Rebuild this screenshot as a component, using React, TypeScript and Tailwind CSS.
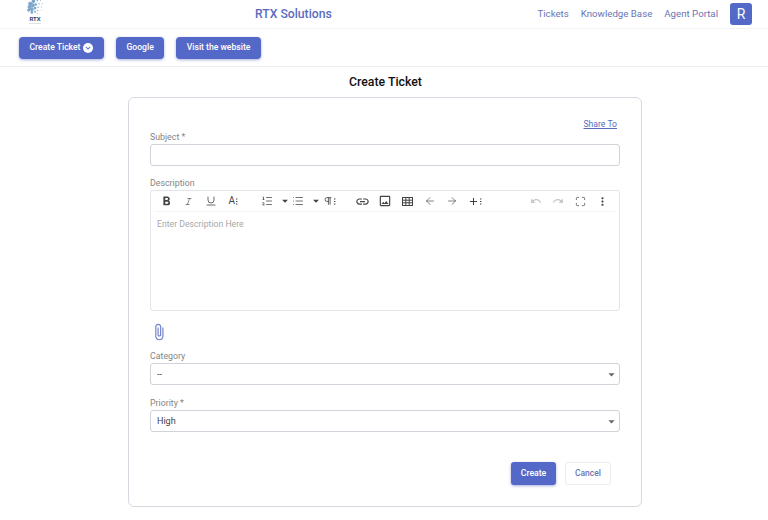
import React from "react";
import {
  ArrowLeft,
  ArrowRight,
  Italic,
  List,
  ListOrdered,
  Maximize,
  Pilcrow,
  Plus,
  Underline,
} from "lucide-react";
import {
  MdArrowDropDown,
  MdAttachFile,
  MdFormatBold,
  MdInsertLink,
  MdKeyboardArrowDown,
  MdMoreVert,
  MdOutlineImage,
  MdRedo,
  MdUndo,
} from "react-icons/md";

const globeDots = [
  [6, 6, 4], [10, 3, 3.4], [5, 10, 3.8], [9, 8, 4], [4, 14, 3], [8, 13, 3.6],
  [13, 7, 2.4], [12, 11.5, 2.6], [8, 17, 2.6], [12, 16, 2], [15, 2, 1.6], [17, 6, 1.5],
  [16, 10.5, 1.5], [15.5, 14.5, 1.4], [19, 1.5, 1], [21, 6, 1], [20, 10, 1], [20, 14, 0.9], [15, 18, 1],
];

function Logo() {
  return (
    <div className="flex flex-col items-center self-start w-[16px] ml-[27px]">
      <svg width="16" height="15" viewBox="2 0 20 19" className="mt-[-1px]">
        {globeDots.map(([x, y, r], i) => (
          <circle key={i} cx={x} cy={y} r={r / 1.5} fill={i < 9 ? "#7fa6cb" : "#8fb5d3"} />
        ))}
      </svg>
      <span className="mt-[1px] text-[6px] leading-[7px] font-bold text-[#33466f]">RTX</span>
      <span className="w-[12px] h-px mt-[1px] bg-[#dfe2e6]" />
    </div>
  );
}

function Dots() {
  return (
    <svg width="2" height="7" viewBox="0 0 2 7" className="ml-[1px] mt-[1px]" fill="currentColor">
      <rect y="0.5" width="1.4" height="1" />
      <rect y="3" width="1.4" height="1" />
      <rect y="5.5" width="1.4" height="1" />
    </svg>
  );
}

function TableIcon() {
  return (
    <svg width="11" height="9" viewBox="0 0 11 9" fill="none" stroke="currentColor" strokeWidth="1">
      <rect x="0.5" y="0.5" width="10" height="8" />
      <path d="M0.5 3.2H10.5M0.5 5.8H10.5M3.8 0.5V8.5M7.2 0.5V8.5" />
    </svg>
  );
}

function ToolBtn({ children, faded, caret }: { children: React.ReactNode; faded?: boolean; caret?: boolean }) {
  return (
    <span
      className={`flex items-center h-[22px] text-[14px] ${
        caret ? "justify-start w-[9px] text-[12px]" : "justify-center w-[22.4px]"
      } ${faded ? "text-[#c8c8c8]" : "text-[#444]"}`}
    >
      {children}
    </span>
  );
}

function Field({ label, children, className }: { label: string; children: React.ReactNode; className?: string }) {
  return (
    <div className={className}>
      <div className="text-[8.8px] leading-[14px] text-[#858585]">{label}</div>
      {children}
    </div>
  );
}

function SelectBox({ value }: { value: string }) {
  return (
    <div className="flex items-center justify-between h-[22px] pl-[6px] border border-[#cfd3da] rounded-[3px] text-[9px] text-[#444]">
      <span className="pt-[1px]">{value}</span>
      <MdArrowDropDown className="text-[15px] text-[#666]" />
    </div>
  );
}

function ActionButton({ children }: { children: React.ReactNode }) {
  return (
    <button className="flex items-center h-[22px] px-[10.5px] rounded-[4px] bg-[#5469c7] text-white text-[8.6px] font-medium shadow-[0_1px_3px_rgba(60,80,180,0.45)]">
      {children}
    </button>
  );
}

export default function App() {
  return (
    <div className="w-[768px] h-[520px] overflow-hidden bg-white font-['Roboto',sans-serif]">
      <header className="relative flex items-center justify-between h-[29px] pr-[16px] border-b border-[#f3f3f5]">
        <Logo />
        <span className="absolute left-[255px] top-[5px] text-[12.2px] leading-[18px] font-medium text-[#5a6cc0]">
          RTX Solutions
        </span>
        <nav className="flex items-center text-[9.7px] text-[#6a75b5]">
          <span>Tickets</span>
          <span className="ml-[12px]">Knowledge Base</span>
          <span className="ml-[12px]">Agent Portal</span>
          <span className="flex items-center justify-center w-[22px] h-[22px] ml-[12px] rounded-[3px] bg-[#5469c7] text-white text-[14px]">
            R
          </span>
        </nav>
      </header>

      <div className="flex items-center gap-[12px] h-[38px] pl-[19px] border-b border-[#f0f0f2]">
        <ActionButton>
          Create Ticket
          <span className="flex items-center justify-center w-[10px] h-[10px] ml-[3px] rounded-full bg-white text-[#5469c7]">
            <MdKeyboardArrowDown className="text-[10px]" />
          </span>
        </ActionButton>
        <ActionButton>Google</ActionButton>
        <ActionButton>Visit the website</ActionButton>
      </div>

      <h1 className="mt-[7px] pl-[3px] text-center text-[12.3px] leading-[16px] font-medium text-[#111]">Create Ticket</h1>

      <main className="w-[514px] h-[410px] mt-[7px] ml-[128px] px-[21px] pt-[20px] border border-[#d5dae0] rounded-[6px]">
        <div className="text-right text-[8.6px] leading-[12px] text-[#5a6cc0] underline pr-[3px]">Share To</div>

        <Field label="Subject *">
          <div className="h-[22px] border border-[#cfd3da] rounded-[3px]" />
        </Field>

        <Field label="Description" className="mt-[10px]">
          <div className="h-[121px] border border-[#e3e4e8] rounded-[3px]">
            <div className="flex items-center h-[21px] mx-[4px] pr-[1px] border-b border-[#f4f4f5]">
              <ToolBtn><MdFormatBold className="text-[15px]" /></ToolBtn>
              <ToolBtn><Italic size={9} strokeWidth={1.6} /></ToolBtn>
              <ToolBtn><Underline size={12} strokeWidth={1.6} /></ToolBtn>
              <ToolBtn>
                <span className="text-[10px] leading-none">A</span>
                <Dots />
              </ToolBtn>
              <span className="w-[11px]" />
              <ToolBtn><ListOrdered size={12} strokeWidth={1.5} /></ToolBtn>
              <ToolBtn caret><MdArrowDropDown className="shrink-0" /></ToolBtn>
              <ToolBtn><List size={12} strokeWidth={1.5} /></ToolBtn>
              <ToolBtn caret><MdArrowDropDown className="shrink-0" /></ToolBtn>
              <ToolBtn>
                <Pilcrow size={10} strokeWidth={2} />
                <Dots />
              </ToolBtn>
              <span className="w-[11px]" />
              <ToolBtn><MdInsertLink className="text-[15px]" /></ToolBtn>
              <ToolBtn><MdOutlineImage className="text-[14px]" /></ToolBtn>
              <ToolBtn><TableIcon /></ToolBtn>
              <ToolBtn><ArrowLeft size={12} strokeWidth={1.3} /></ToolBtn>
              <ToolBtn><ArrowRight size={12} strokeWidth={1.3} /></ToolBtn>
              <ToolBtn>
                <Plus size={11} strokeWidth={2} className="text-[#333]" />
                <Dots />
              </ToolBtn>
              <span className="flex-1" />
              <ToolBtn faded><MdUndo className="text-[12px]" /></ToolBtn>
              <ToolBtn faded><MdRedo className="text-[12px]" /></ToolBtn>
              <ToolBtn><Maximize size={11} strokeWidth={1.6} /></ToolBtn>
              <ToolBtn><MdMoreVert className="text-[13px]" /></ToolBtn>
            </div>
            <div className="mt-[6px] px-[6px] text-[8.7px] leading-[12px] text-[#a8a8a8]">Enter Description Here</div>
          </div>
        </Field>

        <div className="flex h-[16px] mt-[12px] text-[#6c7cc8]">
          <MdAttachFile className="text-[18px]" />
        </div>

        <Field label="Category" className="mt-[10px]">
          <SelectBox value="--" />
        </Field>

        <Field label="Priority *" className="mt-[11px]">
          <SelectBox value="High" />
        </Field>

        <div className="flex justify-end gap-[9px] mt-[30px] pr-[9px]">
          <button className="w-[45px] h-[23px] rounded-[3px] bg-[#5469c7] text-white text-[8.7px] font-medium shadow-[0_1px_3px_rgba(60,80,180,0.45)]">
            Create
          </button>
          <button className="w-[46px] h-[23px] rounded-[3px] border border-[#eceded] bg-white text-[#6a75b5] text-[8.5px] font-medium">
            Cancel
          </button>
        </div>
      </main>
    </div>
  );
}
